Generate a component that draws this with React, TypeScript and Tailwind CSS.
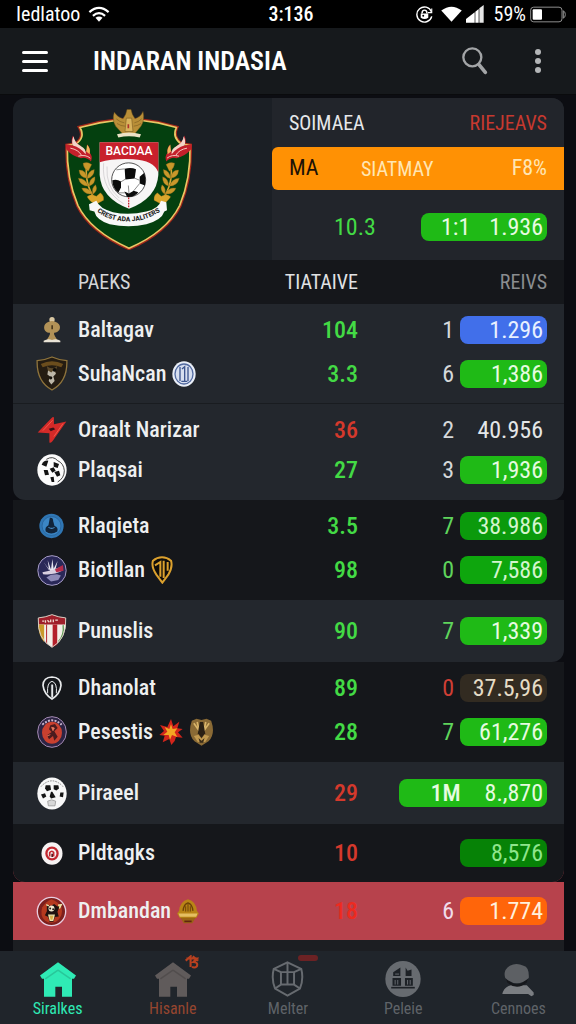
import type { ReactNode } from "react";
import clsx from "clsx";

/* ---------- status bar icons ---------- */

function WifiIcon() {
  return (
    <svg viewBox="0 0 66 50" className="h-4 w-[22px]" fill="none" stroke="#fff" strokeWidth="7">
      <path d="M3 19 Q33 -7 63 19" />
      <path d="M14 31 Q33 14 52 31" />
      <path d="M22 37 Q33 29 44 37 L33 49z" fill="#fff" stroke="none" />
    </svg>
  );
}

function RotationLockIcon() {
  return (
    <svg viewBox="0 0 54 54" className="size-[17px]" fill="none" stroke="#fff" strokeWidth="4.5">
      <path d="M49 18 A24 24 0 1 0 50 33" />
      <path d="M50 8v13H38" strokeWidth="3.5" />
      <path d="M19 24q0-11 8-11t8 11" />
      <path d="M15 24h24v13q-12 8-24 0z" fill="#fff" stroke="none" />
      <circle cx="23" cy="31" r="3" fill="#000" stroke="none" />
    </svg>
  );
}

function FanIcon() {
  return (
    <svg viewBox="0 0 64 50" className="h-4 w-[21px]" fill="#fff">
      <path d="M0 14 Q32 -10 64 14 L32 49z" />
    </svg>
  );
}

function SignalIcon() {
  return (
    <svg viewBox="0 0 54 54" className="size-[18px]" fill="#fff">
      <path d="M0 42 L26 22 V53 H0z" />
      <path d="M28 20 L38 12 V53 H28z" />
      <path d="M40 10 L53 0 V53 H40z" opacity=".9" />
    </svg>
  );
}

function BatteryIcon() {
  return (
    <svg viewBox="0 0 108 50" className="h-[17px] w-9" fill="none" stroke="#aaa" strokeWidth="2.5">
      <rect x="2" y="3" width="94" height="44" rx="9" />
      <path d="M100 14 Q106 16 106 25 T100 36z" />
      <rect x="8" y="9" width="28" height="32" rx="3" fill="#fff" stroke="none" />
    </svg>
  );
}

/* ---------- crest ---------- */

function Laurel() {
  return (
    <g fill="#c9982a" stroke="#7b5a14" strokeWidth="1">
      <path d="M262 205 q-10 60 26 112" fill="none" stroke="#d5a836" strokeWidth="5" />
      <path d="M250 205 q14-6 26 4 l-10 20 q-14-6-16-24z" />
      <path d="M238 226 q20-2 24 24 q-22-2-24-24z" />
      <path d="M284 224 q-20 4-22 28 q22-6 22-28z" />
      <path d="M236 250 q22 0 30 24 q-24 0-30-24z" />
      <path d="M286 246 q-18 6-18 28 q20-6 18-28z" />
      <path d="M246 280 q20-4 34 16 q-24 6-34-16z" />
      <path d="M288 270 q-14 10-8 28 q16-10 8-28z" />
      <path d="M262 306 q12-12 28-2 l12-10 q12 8 10 22 l-22 12 q-18-4-28-22z" fill="#dba62c" />
    </g>
  );
}

function Flame() {
  return (
    <g>
      <path
        d="M198 148 l22 4 q-8-14 0-30 q4 20 22 30 l14 20 q8-10 6-24 q12 12 8 26 q10 10 4 26 q-14-14-30-10 q-24-4-44-26z"
        fill="#c3202b"
      />
      <path d="M220 152 q-6-12 2-28 q2 20 22 30 q16 8 14 24 q-16-20-38-26z" fill="#f2d5c9" />
      <path d="M212 160 q24 4 34 22 M236 184 q22-6 36 6" stroke="#f6c4bd" strokeWidth="3" fill="none" />
      <path d="M262 150 q12 12 8 28 l-10-8z" fill="#efb65b" />
    </g>
  );
}

function Crest() {
  const shield =
    "M241 98 L300 84 Q345 76 388 74 Q430 76 476 84 L530 98 Q516 128 546 148 L571 152 Q574 250 540 332 Q500 412 388 460 Q272 408 235 332 Q200 250 203 152 L228 148 Q258 128 241 98z";
  return (
    <svg viewBox="190 40 390 425" className="h-[142px] w-[130px]" role="img" aria-label="Club crest">
      <path d={shield} fill="#033c14" stroke="#a5281a" strokeWidth="12" />
      <path d={shield} fill="#04400f" stroke="#e9c765" strokeWidth="5" />
      <Laurel />
      <g transform="matrix(-1 0 0 1 775 0)">
        <Laurel />
      </g>
      <Flame />
      <g transform="matrix(-1 0 0 1 774 0)">
        <Flame />
      </g>
      {/* inner shield */}
      <path d="M300 142 H476 V240 Q472 310 388 342 Q304 310 300 240z" fill="#f7f5f5" />
      <path d="M300 142 H476 V232 Q462 196 400 193 Q340 190 300 202z" fill="#c8202c" />
      <path d="M312 205 q-8 80 60 122 M322 215 q-4 60 36 94" fill="none" stroke="#c9c6c8" strokeWidth="2" />
      <text
        x="388"
        y="182"
        textAnchor="middle"
        fontFamily="Roboto, sans-serif"
        fontSize="36"
        fontWeight="500"
        fill="#fff"
      >
        BACDAA
      </text>
      {/* ball */}
      <circle cx="387" cy="255" r="51" fill="#fff" stroke="#333" strokeWidth="2.5" />
      <g fill="#0b0b0b">
        <path d="M375 222 q18-6 34 1 l-4 28 -28 3z" />
        <path d="M338 256 q14-4 26 4 l0 18 -8 16 q-18-14-18-38z" />
        <path d="M420 246 l14 -12 q6 18 2 38 l-16 -6z" />
        <path d="M374 290 l14 6 14-8 14 4 q-12 16-34 14z" />
      </g>
      <path
        d="M377 253 l-13 8 M405 250 l14 6 M388 296 l-2-24 M356 294 l20 0 M402 288 l18-22 M350 225 l25 -3"
        stroke="#555"
        strokeWidth="2"
      />
      <path d="M387 308 v30" stroke="#c8202c" strokeWidth="4" strokeDasharray="5 3" />
      {/* ribbon */}
      <path
        d="M268 328 L290 318 Q300 342 340 352 Q388 362 440 350 Q478 342 484 318 L500 322 L502 346 L494 350 Q486 376 440 388 Q388 400 330 388 Q290 376 284 350 L270 346z"
        fill="#f8f8f8"
      />
      <path id="ribbon-line" d="M292 350 Q330 380 388 380 Q446 378 494 342" fill="none" />
      <text fontFamily="Roboto, sans-serif" fontSize="20" fontWeight="800" fill="#222">
        <textPath href="#ribbon-line">CREST ADA JALITERS</textPath>
      </text>
      {/* garuda */}
      <g fill="#b98f38" stroke="#6f511a" strokeWidth="1.5">
        <path d="M344 52 q8 14 26 20 l8-14 4-14 12 0 4 14 8 14 q18-6 24-22 q6 26-6 44 l-18 22 -38 0 -20-22 q-12-20-4-42z" />
        <path d="M350 72 q10 10 24 12 M352 86 q12 8 24 8 M426 72 q-10 10-22 12 M424 86 q-12 8-22 8" fill="none" />
        <path d="M380 70 h16 l4 40 h-24z" fill="#d9b35c" />
      </g>
      <path d="M386 88 v12" stroke="#b0332a" strokeWidth="5" />
      <path d="M352 118 q36-10 72 0 l-4 10 q-32-8-64 0z" fill="#ece3c6" />
    </svg>
  );
}

/* ---------- club badges ---------- */

type BadgeName =
  | "cup"
  | "darkShield"
  | "blueCoin"
  | "bolt"
  | "ball"
  | "blueDisc"
  | "violetDisc"
  | "goldDrop"
  | "redShield"
  | "whiteDrop"
  | "redDisc"
  | "burst"
  | "goldShield"
  | "skull"
  | "target"
  | "fireDisc"
  | "goldLamp";

const badges: Record<BadgeName, ReactNode> = {
  cup: (
    <svg viewBox="0 0 60 84" className="h-[28px] w-5">
      <circle cx="30" cy="11" r="8" fill="#d8c7a2" />
      <path d="M14 20 Q30 10 46 20 Q58 28 52 42 Q44 52 36 50 L38 68 H22 L24 50 Q12 52 7 40 Q4 26 14 20z" fill="#b29257" />
      <path d="M24 56 H36 L46 72 H14z" fill="#b29257" />
      <path d="M28 28 h5 v12 h-5z" fill="#4b3a1e" />
      <path d="M5 74 Q18 66 30 72 Q44 66 55 74 V79 H5z" fill="#e9e3d6" />
    </svg>
  ),
  darkShield: (
    <svg viewBox="0 0 96 106" className="h-[35px] w-8">
      <path d="M3 14 Q28 12 48 3 Q68 12 93 14 Q95 78 48 103 Q1 78 3 14z" fill="#241c12" stroke="#8f743c" strokeWidth="4" />
      <path d="M14 24 Q48 8 82 24 L76 34 Q48 22 20 34z" fill="#6b4d1d" />
      <path d="M32 30 q16 14 32 0 l-6 24 q-10 12-20 0z" fill="#5d4a2b" />
      <path d="M36 44 l10 6 8-8 6 12 -8 8 4 14 -10 10 -8-10 4-14 -8-6z" fill="#bdb7a8" />
      <circle cx="56" cy="42" r="6" fill="#0d0b08" />
      <circle cx="44" cy="66" r="5" fill="#14110c" />
    </svg>
  ),
  blueCoin: (
    <svg viewBox="0 0 72 78" className="h-[26px] w-6">
      <ellipse cx="36" cy="39" rx="35" ry="38" fill="#e9eef7" />
      <ellipse cx="36" cy="39" rx="27" ry="30" fill="#d7dff0" stroke="#526aa0" strokeWidth="4" />
      <path d="M24 18 V60 M48 18 V60 M30 24 L38 17 V60 M28 61 H46" fill="none" stroke="#3d568f" strokeWidth="4" />
    </svg>
  ),
  bolt: (
    <svg viewBox="0 0 92 84" className="h-7 w-[30px]">
      <path d="M2 50 L44 6 Q50 0 52 4 L52 24 L90 16 L48 76 Q42 84 38 80 L38 52z" fill="#d42a28" />
      <path d="M18 44 L48 12 M52 62 L80 22" stroke="#f25a4a" strokeWidth="3" />
      <path d="M36 38 l14-4 6 6 -14 6z" fill="#3a1116" />
    </svg>
  ),
  ball: (
    <svg viewBox="0 0 90 96" className="h-8 w-[30px]">
      <ellipse cx="45" cy="48" rx="44" ry="47" fill="#fbfbfb" />
      <path d="M28 16 q20-12 34 4 q18 8 20 30 q0 22-20 34" fill="none" stroke="#222" strokeWidth="2.5" />
      <g fill="#111">
        <path d="M34 20 l-6 18 -14 -6 q6-14 20-12z" />
        <path d="M50 24 l16 6 -4 12 -12-4z" />
        <path d="M20 48 l12 0 4 14 -12 2z" />
        <path d="M38 44 l12-4 6 10 -10 6z" />
        <path d="M52 54 l14 -4 4 14 -10 4z" />
        <path d="M40 70 l10-2 2 16 -8 0z" />
      </g>
    </svg>
  ),
  blueDisc: (
    <svg viewBox="0 0 74 76" className="h-[26px] w-[25px]">
      <circle cx="37" cy="38" r="36" fill="#2f76b4" />
      <circle cx="37" cy="38" r="28" fill="#3b86c5" stroke="#255d92" strokeWidth="2" />
      <path d="M32 14 q10-2 10 10 l4 14 q12 4 8 16 q-18 12-34 0 q-4-12 8-18z" fill="#11243a" />
      <path d="M28 42 q10 6 18 0" stroke="#4a8fc8" strokeWidth="3" fill="none" />
    </svg>
  ),
  violetDisc: (
    <svg viewBox="0 0 90 94" className="h-[31px] w-[30px]">
      <ellipse cx="45" cy="47" rx="43" ry="45" fill="#2a2858" stroke="#a99fc8" strokeWidth="3" />
      <path d="M20 22 L36 46 L32 16 L42 44 L46 12 L50 42 L62 18 L56 42 L44 54z" fill="#e8e6f2" />
      <path d="M16 52 Q44 48 76 34 L76 48 Q50 62 18 58z" fill="#d9cfe0" />
      <path d="M54 44 L78 30 L80 48 L58 52z" fill="#b52c4b" />
      <path d="M28 68 l14-8 18-2 12 4 -8 14 -22 4z" fill="#8f8bb8" />
    </svg>
  ),
  goldDrop: (
    <svg viewBox="0 0 66 84" className="h-7 w-[22px]">
      <path d="M33 4 Q48 4 60 14 Q66 32 52 56 L34 80 L16 56 Q0 32 6 14 Q18 4 33 4z" fill="#0f0d0a" stroke="#dba12e" strokeWidth="6" />
      <path d="M12 28 L28 18 V62 M38 14 V66 M50 18 V44" fill="none" stroke="#dba12e" strokeWidth="6" />
    </svg>
  ),
  redShield: (
    <svg viewBox="0 0 88 104" className="h-[34px] w-[30px]">
      <path d="M2 12 Q24 10 44 2 Q64 10 86 12 Q90 76 44 102 Q-2 76 2 12z" fill="#f4efe8" />
      <path d="M2 12 Q24 10 44 2 Q64 10 86 12 V32 H2z" fill="#9e1f2a" />
      <path d="M2 32 H20 V86 Q2 66 2 32z" fill="#c99a2a" />
      <path d="M46 32 h14 v62 l-14 8z M26 32 h3 v60 l-3-3z" fill="#b3202a" />
      <path d="M78 34 q4 30-14 50" stroke="#5c9a52" strokeWidth="4" fill="none" />
      <path d="M14 22 h6 m4-3 v8 m6-8 l6 6 m4-8 v8 m8-8 v8 m6-6 h8" stroke="#f0d9d0" strokeWidth="4" fill="none" />
      <path d="M2 12 Q24 10 44 2 Q64 10 86 12 Q90 76 44 102 Q-2 76 2 12z" fill="none" stroke="#d8cbc0" strokeWidth="3" />
    </svg>
  ),
  whiteDrop: (
    <svg viewBox="0 0 60 72" className="h-6 w-5" fill="none" stroke="#e8eaec">
      <path d="M30 3 Q56 4 57 28 Q54 54 30 69 Q6 54 3 28 Q4 4 30 3z" strokeWidth="5" />
      <path d="M17 52 Q14 20 30 16 Q46 20 43 52" strokeWidth="3" />
      <path d="M28 26 h5 v36 l-3 4 -2-4z" fill="#e8eaec" strokeWidth="1" />
    </svg>
  ),
  redDisc: (
    <svg viewBox="0 0 90 96" className="h-8 w-[30px]">
      <ellipse cx="45" cy="48" rx="43" ry="46" fill="#2c2444" stroke="#a58bb4" strokeWidth="3" />
      <ellipse cx="45" cy="50" rx="30" ry="33" fill="#c9402f" />
      <path d="M16 26 Q45 0 74 26" fill="none" stroke="#cbb7cf" strokeWidth="6" strokeDasharray="6 4" />
      <path d="M40 28 l14-4 8 12 -10 10 10 16 -10 12 -4-14 -12 10 -6-12 14-10 -8-8z" fill="#4a1b1e" />
      <path d="M44 34 l8 2 -4 8z M30 60 l10-4" fill="#e9a08a" stroke="#e06a50" strokeWidth="3" />
    </svg>
  ),
  burst: (
    <svg viewBox="0 0 70 78" className="h-[26px] w-6">
      <path
        d="M35 0 L42 22 L60 8 L54 28 L70 30 L56 40 L70 56 L50 54 L46 66 L36 78 L30 60 L10 70 L16 50 L0 48 L14 36 L2 18 L24 24z"
        fill="#d3251b"
      />
      <path d="M35 16 L40 30 L54 28 L46 40 L54 54 L38 48 L32 62 L28 48 L12 48 L24 38 L16 24 L30 30z" fill="#f5a623" />
    </svg>
  ),
  goldShield: (
    <svg viewBox="0 0 74 84" className="h-7 w-[25px]">
      <path d="M8 8 L22 2 L37 6 L52 2 L66 8 Q80 48 58 70 L37 83 L16 70 Q-6 48 8 8z" fill="#8a6a35" />
      <path d="M14 16 L30 38 L24 12 M60 16 L44 38 L50 12" fill="none" stroke="#d9b56a" strokeWidth="5" />
      <path d="M32 12 h10 l6 34 -11 14 -11-14z" fill="#2a2014" />
      <path d="M14 54 l14-4 9 12 9-12 14 4 -12 18 H26z" fill="#c29a50" />
      <path d="M28 60 l9 8 9-8 -4 14 h-10z" fill="#3a2c18" />
    </svg>
  ),
  skull: (
    <svg viewBox="0 0 90 98" className="h-[33px] w-[30px]">
      <ellipse cx="45" cy="49" rx="44" ry="48" fill="#f8f8f8" />
      <path d="M12 28 Q45 -6 78 28" fill="none" stroke="#777" strokeWidth="2.5" strokeDasharray="5 3" />
      <g fill="#151515">
        <path d="M26 24 l14 0 2 14 -12 4 -6-8z" />
        <path d="M50 24 l14 0 2 10 -8 6 -8-4z" />
        <path d="M12 52 l12 -4 4 10 -10 6z" />
        <path d="M42 44 l4 0 10 16 -14 4 -4-6z" />
        <path d="M70 46 l10 0 -2 14 -10-2z" />
      </g>
      <path d="M32 72 l12-4 12 4 -2 14 h-20z" fill="#d8d8d8" stroke="#888" strokeWidth="2" />
    </svg>
  ),
  target: (
    <svg viewBox="0 0 66 70" className="h-[23px] w-[22px]">
      <ellipse cx="33" cy="35" rx="32" ry="34" fill="#f6f2f2" />
      <ellipse cx="33" cy="35" rx="17" ry="18" fill="none" stroke="#c2272f" strokeWidth="7" />
      <path d="M26 44 V32 Q33 24 38 32 V44" fill="none" stroke="#c2272f" strokeWidth="5" />
      <path d="M31 36 h5 v10 h-5z" fill="#57131a" />
    </svg>
  ),
  fireDisc: (
    <svg viewBox="0 0 92 94" className="h-[31px] w-[31px]">
      <circle cx="46" cy="47" r="43" fill="#7c1f1d" stroke="#e8cde0" strokeWidth="4" />
      <path d="M18 34 Q30 16 46 10 Q64 16 76 34 Q84 60 60 78 Q40 86 26 74 Q10 60 18 34z" fill="#b5391f" />
      <path d="M32 26 l12 4 10-6 10 8 8-4 -8 20 4 14 -12 2 -4 14 -12 0 -4-14 -10-6 6-12z" fill="#1f1210" />
      <circle cx="46" cy="38" r="9" fill="#f1e9cf" />
      <path d="M30 26 l8 4 M66 28 l10-2 -6 12 M38 58 l16 0 -4 16 -8 0z" fill="#d8b046" stroke="#efe2a8" strokeWidth="4" />
      <circle cx="42" cy="38" r="3" fill="#251815" />
      <circle cx="51" cy="40" r="3" fill="#251815" />
    </svg>
  ),
  goldLamp: (
    <svg viewBox="0 0 66 76" className="h-[25px] w-[22px]">
      <path d="M33 1 Q58 8 60 36 L66 44 L58 58 H8 L0 44 L6 36 Q8 8 33 1z" fill="#b98416" />
      <path d="M18 36 Q20 16 33 12 Q46 16 48 36" fill="none" stroke="#6b4208" strokeWidth="4" />
      <path d="M33 14 V38 M26 22 V38 M40 22 V38" stroke="#6b4208" strokeWidth="3" />
      <path d="M4 44 H62 L58 54 H8z" fill="#e5bf62" />
      <path d="M10 57 H56 L46 74 H20z" fill="#9a6414" />
      <path d="M22 68 H44" stroke="#5f2410" strokeWidth="5" />
    </svg>
  ),
};

/* ---------- table ---------- */

type Row = {
  name: string;
  icon: BadgeName;
  extras?: BadgeName[];
  value: string;
  valueColor: string;
  rank?: string;
  rankColor?: string;
  tag?: string;
  amount: string;
  pill: string;
  // where the row sits in its group
  place: "top" | "upper" | "bottom" | "single" | "short";
  surface: string;
  corners?: "bottom" | "bottomRight";
  divider?: boolean;
  behind?: string;
};

const GREEN = "text-[#43da45]";
const RED = "text-[#d5392c]";
const LIGHT = "bg-[#23272d]";
const DARK = "bg-[#15171b]";
const PILL = "bg-[#1fba16] text-[#e6fbe0]";

const rows: Row[] = [
  { name: "Baltagav", icon: "cup", value: "104", valueColor: GREEN, rank: "1", amount: "1.296", pill: "bg-[#416fea] text-[#e8f0ff]", place: "top", surface: LIGHT },
  { name: "SuhaNcan", icon: "darkShield", extras: ["blueCoin"], value: "3.3", valueColor: GREEN, rank: "6", amount: "1,386", pill: PILL, place: "bottom", surface: LIGHT, divider: true },
  { name: "Oraalt Narizar", icon: "bolt", value: "36", valueColor: RED, rank: "2", amount: "40.956", pill: "text-[#e4e6e8]", place: "upper", surface: LIGHT },
  { name: "Plaqsai", icon: "ball", value: "27", valueColor: GREEN, rank: "3", amount: "1,936", pill: PILL, place: "bottom", surface: LIGHT, corners: "bottom" },
  { name: "Rlaqieta", icon: "blueDisc", value: "3.5", valueColor: GREEN, rank: "7", rankColor: "text-[#5fd45c]", amount: "38.986", pill: "bg-[#0b9a0c] text-[#d3f5cd]", place: "top", surface: DARK },
  { name: "Biotllan", icon: "violetDisc", extras: ["goldDrop"], value: "98", valueColor: GREEN, rank: "0", rankColor: "text-[#5fd45c]", amount: "7,586", pill: "bg-[#0ea60d] text-[#d3f5cd]", place: "bottom", surface: DARK },
  { name: "Punuslis", icon: "redShield", value: "90", valueColor: GREEN, rank: "7", rankColor: "text-[#5fd45c]", amount: "1,339", pill: PILL, place: "single", surface: LIGHT, corners: "bottomRight" },
  { name: "Dhanolat", icon: "whiteDrop", value: "89", valueColor: GREEN, rank: "0", rankColor: "text-[#cf3f35]", amount: "37.5,96", pill: "bg-[#322b21] text-[#e5dcc6]", place: "top", surface: DARK },
  { name: "Pesestis", icon: "redDisc", extras: ["burst", "goldShield"], value: "28", valueColor: GREEN, rank: "7", rankColor: "text-[#5fd45c]", amount: "61,276", pill: PILL, place: "bottom", surface: DARK },
  { name: "Piraeel", icon: "skull", value: "29", valueColor: RED, tag: "1M", amount: "8.,870", pill: PILL, place: "single", surface: LIGHT },
  { name: "Pldtagks", icon: "target", value: "10", valueColor: RED, amount: "8,576", pill: "bg-[#068206] text-[#8fe58c]", place: "short", surface: DARK, corners: "bottom", behind: "bg-[#b7424c]" },
  { name: "Dmbandan", icon: "fireDisc", extras: ["goldLamp"], value: "18", valueColor: "text-[#ee2a20]", rank: "6", rankColor: "text-[#f1dcea]", amount: "1.774", pill: "bg-[#ff650a] text-[#fff0dc]", place: "short", surface: "bg-[#b7424c]" },
];

function ClubRow({ row }: { row: Row }) {
  const cell = clsx(
    "p-0",
    row.surface,
    row.place === "top" && "h-12 pt-1",
    row.place === "upper" && "h-11 pt-2",
    row.place === "bottom" && "h-[52px] pb-2",
    row.place === "single" && "h-[62px]",
    row.place === "short" && "h-[58px]",
    row.divider && "border-b border-[#191c20]"
  );

  return (
    <tr className={row.behind}>
      <td className={clsx(cell, row.corners === "bottom" && "rounded-bl-xl")}>
        <div className="flex h-7 items-center justify-center pl-3">{badges[row.icon]}</div>
      </td>
      <th scope="row" className={clsx(cell, "text-left text-[22px] font-medium text-[#eef0f1]")}>
        <div className="flex h-7 items-center gap-1 whitespace-nowrap">
          <span>{row.name}</span>
          {row.extras?.map((extra) => (
            <span key={extra} className="pl-0.5">
              {badges[extra]}
            </span>
          ))}
        </div>
      </th>
      <td className={clsx(cell, "text-right font-medium", row.valueColor)}>{row.value}</td>
      {!row.tag && (
        <td className={clsx(cell, "text-right", row.rankColor ?? "text-[#d5d8da]")}>{row.rank}</td>
      )}
      <td
        colSpan={row.tag ? 2 : 1}
        className={clsx(cell, "pr-[17px]", row.corners && "rounded-br-xl")}
      >
        <div
          className={clsx(
            "ml-auto flex h-7 items-center justify-end gap-6 rounded-lg pr-1",
            row.tag ? "w-[148px]" : "w-[87px]",
            row.pill
          )}
        >
          {row.tag && <span className="font-medium">{row.tag}</span>}
          <span>{row.amount}</span>
        </div>
      </td>
    </tr>
  );
}

/* ---------- bottom nav ---------- */

function HomeIcon() {
  return (
    <svg viewBox="0 0 108 104" className="h-[35px] w-9" fill="currentColor">
      <path d="M54 0 L108 40 L102 50 H96 V104 H66 V74 H46 V104 H12 V50 H6 L0 40z" />
      <path d="M54 24 L92 50 M54 24 L16 50" stroke="#000" strokeOpacity=".15" strokeWidth="5" />
    </svg>
  );
}

function CubeIcon() {
  return (
    <svg viewBox="0 0 100 110" className="h-9 w-[33px]" fill="none" stroke="currentColor" strokeWidth="6">
      <path d="M50 4 L92 24 Q100 56 88 84 L50 106 L12 84 Q0 56 8 24z" />
      <path d="M30 34 H70 V72 H30z M50 4 V72 M8 24 L30 34 M92 24 L70 34 M12 84 L30 72 M88 84 L70 72" />
    </svg>
  );
}

function BooksIcon() {
  return (
    <svg viewBox="0 0 108 110" className="h-9 w-9">
      <ellipse cx="54" cy="55" rx="54" ry="55" fill="currentColor" />
      <g fill="#1d2126">
        <path d="M24 34 L46 20 V46 H24z M62 20 L68 30 L80 26 V46 H62z" />
        <path d="M22 52 H48 V76 H22z M60 52 H84 V76 H60z" />
        <path d="M18 79 H90 V84 H18z" />
      </g>
      <path d="M30 58 v14 M38 58 v14 M68 58 v14 M76 58 v14 M30 40 h12" stroke="currentColor" strokeWidth="3" />
    </svg>
  );
}

function ProfileIcon() {
  return (
    <svg viewBox="0 0 98 100" className="h-[34px] w-8">
      <path d="M28 66 H76 L97 88 V96 L90 100 L80 93 H1 Q4 76 20 68z" fill="#7b7e82" />
      <path d="M12 42 Q44 84 80 42 L76 58 Q46 84 16 58z" fill="#16181c" />
      <path d="M24 6 Q44 -4 66 6 Q84 10 82 44 Q46 76 10 44 Q2 20 24 6z" fill="currentColor" />
    </svg>
  );
}

const navItems = [
  { label: "Siralkes", icon: <HomeIcon />, color: "text-[#2feab5]", labelColor: "text-[#2feab5]" },
  { label: "Hisanle", icon: <HomeIcon />, color: "text-[#605b5b]", labelColor: "text-[#96452f]", mark: "spark" },
  { label: "Melter", icon: <CubeIcon />, color: "text-[#676b70]", labelColor: "text-[#5f6368]", mark: "dash" },
  { label: "Peleie", icon: <BooksIcon />, color: "text-[#676b70]", labelColor: "text-[#5f6368]" },
  { label: "Cennoes", icon: <ProfileIcon />, color: "text-[#5d6064]", labelColor: "text-[#5f6368]" },
];

function App() {
  return (
    <div className="flex min-h-screen flex-col bg-[#0c0d12] font-['Roboto_Condensed','Liberation_Sans_Narrow',Roboto,sans-serif] text-white">
      <div className="grid h-7 grid-cols-[1fr_auto_1fr] items-center bg-black pr-2.5 pl-4 text-xl leading-7">
        <div className="flex items-center gap-2">
          <span>Iedlatoo</span>
          <WifiIcon />
        </div>
        <span className="font-medium">3:136</span>
        <div className="flex items-center justify-end gap-1">
          <RotationLockIcon />
          <span className="pl-1">
            <FanIcon />
          </span>
          <SignalIcon />
          <span className="pl-1.5">59%</span>
          <BatteryIcon />
        </div>
      </div>

      <header className="flex h-[67px] items-center border-b border-[#0a0b0d] bg-[#16191c] pr-6 pl-[22px]">
        <button type="button" aria-label="Menu" className="flex w-[71px] flex-col gap-1.5">
          <span className="h-[3px] w-[26px] rounded-sm bg-white" />
          <span className="h-[3px] w-[26px] rounded-sm bg-white" />
          <span className="h-[3px] w-[26px] rounded-sm bg-white" />
        </button>
        <h1 className="grow text-[26px] leading-9 font-semibold">INDARAN INDASIA</h1>
        <button type="button" aria-label="Search">
          <svg viewBox="0 0 78 84" className="h-7 w-[26px]" fill="none" stroke="#a3a5a7">
            <circle cx="31" cy="31" r="27" strokeWidth="7" />
            <path d="M51 53 L70 76" strokeWidth="11" strokeLinecap="round" />
          </svg>
        </button>
        <button type="button" aria-label="More" className="ml-9 flex w-7 justify-center">
          <svg viewBox="0 0 18 72" className="h-6 w-1.5 overflow-visible" fill="#b4b6b8">
            <circle cx="9" cy="9" r="9" />
            <circle cx="9" cy="36" r="9" />
            <circle cx="9" cy="63" r="9" />
          </svg>
        </button>
      </header>

      <main className="mt-[3px] mr-3 ml-[13px] flex grow flex-col bg-[#0c0d12] text-2xl leading-7">
        <section className="flex overflow-hidden rounded-t-xl bg-[#1b1f25]">
          <div className="flex w-[47%] justify-center pt-2.5 pr-7">
            <Crest />
          </div>
          <div className="grow bg-[#22252b] text-xl">
            <div className="flex h-[49px] items-center justify-between pr-[17px] pl-[17px]">
              <span className="text-[#e6e8ea]">SOIMAEA</span>
              <span className="text-[#c7392f]">RIEJEAVS</span>
            </div>
            <div className="flex h-[43px] items-center rounded-l-md bg-[#ff9104] pr-[17px] pl-[17px]">
              <span className="w-[72px] text-[22px] text-[#1d1206]">MA</span>
              <span className="grow text-[#ffe6b4]">SIATMAY</span>
              <span className="text-[22px] text-[#ffe6b4]">F8%</span>
            </div>
            <div className="flex h-[70px] items-center justify-between pt-1 pr-[17px] pl-[62px] text-2xl">
              <span className={GREEN}>10.3</span>
              <div className={clsx("flex h-7 w-[126px] items-center justify-between rounded-lg pr-1 pl-5", PILL)}>
                <span>1:1</span>
                <span>1.936</span>
              </div>
            </div>
          </div>
        </section>

        <table className="w-full table-fixed border-separate border-spacing-0">
          <colgroup>
            <col className="w-[65px]" />
            <col />
            <col className="w-20" />
            <col className="w-24" />
            <col className="w-[110px]" />
          </colgroup>
          <thead className="text-xl">
            <tr className="h-11 bg-[#15171b]">
              <th className="p-0" />
              <th scope="col" className="p-0 text-left font-normal text-[#d4d6d8]">
                PAEKS
              </th>
              <th scope="col" className="p-0 text-right font-normal text-[#e0e2e4]">
                TIATAIVE
              </th>
              <th className="p-0" />
              <th scope="col" className="p-0 pr-[17px] text-right font-normal text-[#8a8d90]">
                REIVS
              </th>
            </tr>
          </thead>
          <tbody>
            {rows.map((row) => (
              <ClubRow key={row.name} row={row} />
            ))}
          </tbody>
        </table>
        <div className="min-h-2 grow bg-[#1c1e22]" />
      </main>

      <nav className="grid h-[73px] grid-cols-5 bg-[#20252b]">
        {navItems.map((item) => (
          <a key={item.label} href="#" className="flex flex-col items-center gap-1 pt-2.5">
            <span className={clsx("relative flex h-9 items-end", item.color)}>
              {item.icon}
              {item.mark === "spark" && (
                <svg viewBox="0 0 40 40" className="absolute -top-1.5 -right-2 size-3.5" fill="none" stroke="#b8401f" strokeWidth="6">
                  <path d="M2 16 L16 4 V34 M4 10 H34 L24 20 Q38 20 34 32 Q28 38 20 34 M22 4 L38 16" />
                </svg>
              )}
              {item.mark === "dash" && <span className="absolute -top-1.5 -right-3.5 h-1.5 w-5 rounded-sm bg-[#6b2224]" />}
            </span>
            <span className={clsx("text-base leading-4", item.labelColor)}>{item.label}</span>
          </a>
        ))}
      </nav>
    </div>
  );
}

export default App;
